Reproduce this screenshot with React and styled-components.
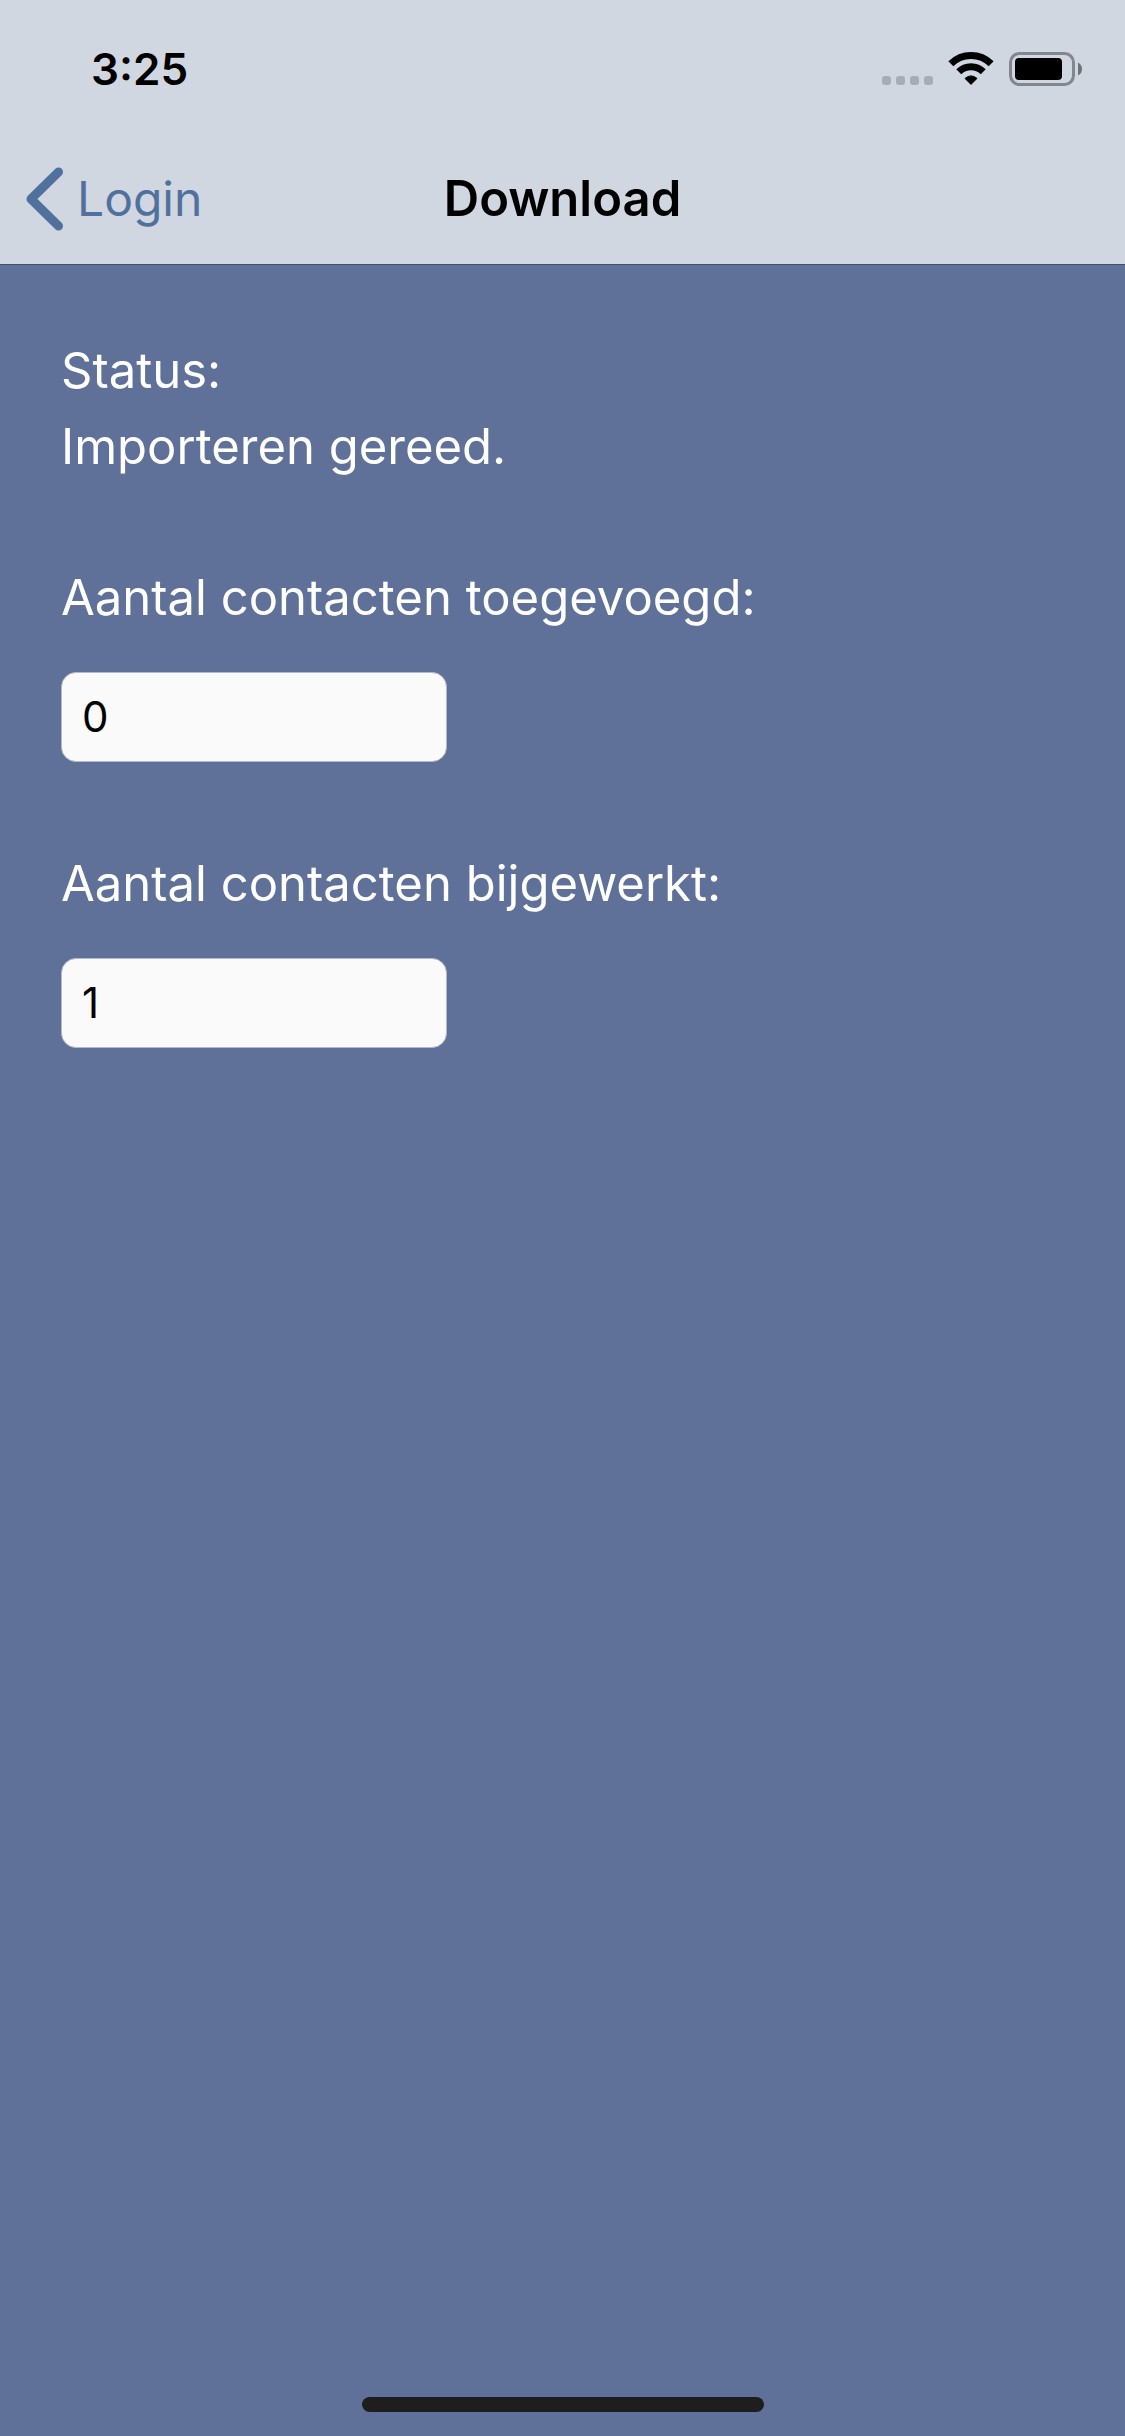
import React, { useState } from 'react';
import styled, { createGlobalStyle } from 'styled-components';

const GlobalStyle = createGlobalStyle`
  * {
    box-sizing: border-box;
  }
  body {
    margin: 0;
    background: #5f7198;
    font-family: Inter, "Liberation Sans", sans-serif;
  }
`

const Screen = styled.div`
  display: flex;
  flex-direction: column;
  min-height: 100vh;
  background: #5f7198;
`

const Header = styled.header`
  background: #d0d7e1;
  border-bottom: 1px solid #43506b;
`

const StatusBar = styled.div`
  display: flex;
  justify-content: space-between;
  align-items: center;
  height: 132px;
  padding: 6px 43px 0 91px;
`

const Time = styled.span`
  font-size: 44px;
  line-height: 54px;
  font-weight: 600;
  color: #000;
`

const Indicators = styled.div`
  display: flex;
  align-items: flex-end;
  gap: 15px;
`

const Signal = styled.div`
  display: flex;
  gap: 5px;
  padding-bottom: 1px;
`

const Dot = styled.span`
  width: 9px;
  height: 9px;
  border-radius: 3px;
  background: #a7acb5;
`

const NavBar = styled.nav`
  display: grid;
  grid-template-columns: 1fr auto 1fr;
  align-items: center;
  height: 132px;
  padding: 2px 26px 0;
`

const BackLink = styled.a`
  display: flex;
  align-items: center;
  gap: 13px;
  font-size: 48px;
  line-height: 60px;
  color: #50719d;
  text-decoration: none;
`

const Title = styled.h1`
  margin: 0;
  font-size: 49px;
  line-height: 60px;
  font-weight: 600;
  color: #000;
`

const Content = styled.main`
  flex: 1;
  padding: 68px 61px;
  color: #fff;
  font-size: 49px;
  line-height: 76px;
`

const Line = styled.p`
  margin: 0;
`

const Field = styled.div`
  display: flex;
  flex-direction: column;
  align-items: flex-start;
  gap: 36px;
  margin-top: ${props => props.$first ? 75 : 84}px;
`

const TextBox = styled.input`
  width: 386px;
  height: 90px;
  padding: 0 20px 2px;
  border: 1px solid #b3b9c6;
  border-radius: 15px;
  background: #fafafa;
  color: #000;
  font-family: inherit;
  font-size: 42px;
  outline: 0;
`

const Footer = styled.footer`
  display: flex;
  justify-content: center;
  padding-bottom: 24px;
`

const HomeIndicator = styled.div`
  width: 402px;
  height: 15px;
  border-radius: 8px;
  background: #1e1e1e;
`

function WifiIcon() {
  return (
    <svg width="46" height="34" viewBox="0 0 46 34" fill="none" stroke="#000" strokeWidth="7">
      <path d="M2.85 11.85A28.5 28.5 0 0 1 43.15 11.85" />
      <path d="M10.75 19.75A17.3 17.3 0 0 1 35.25 19.75" />
      <path d="M23 32.4L17 26.4Q23 21.4 29 26.4Z" fill="#000" strokeWidth="1" strokeLinejoin="round" />
    </svg>
  )
}

function BatteryIcon() {
  return (
    <svg width="73" height="34" viewBox="0 0 73 34">
      <rect x="1.5" y="1.5" width="63" height="31" rx="9" fill="none" stroke="#83878d" strokeWidth="3" />
      <rect x="6" y="6" width="47" height="22" rx="4" fill="#000" />
      <path d="M69 10.5Q73 12.5 73 17T69 23.5Z" fill="#6f7379" />
    </svg>
  )
}

function BackIcon() {
  return (
    <svg width="38" height="64" viewBox="0 0 38 64" fill="none" stroke="#50719d" strokeWidth="9" strokeLinecap="round" strokeLinejoin="round">
      <path d="M32.5 5L5 32L32.5 59" />
    </svg>
  )
}

function CountField({ id, label, initial, first }) {
  const [value, setValue] = useState(initial);

  return (
    <Field $first={first}>
      <label htmlFor={id}>{label}</label>
      <TextBox id={id} type="text" value={value} onChange={(event) => setValue(event.target.value)} />
    </Field>
  )
}

function App() {
  return (
    <Screen>
      <GlobalStyle />
      <Header>
        <StatusBar>
          <Time>3:25</Time>
          <Indicators>
            <Signal>
              <Dot /><Dot /><Dot /><Dot />
            </Signal>
            <WifiIcon />
            <BatteryIcon />
          </Indicators>
        </StatusBar>
        <NavBar>
          <BackLink href="#login"><BackIcon />Login</BackLink>
          <Title>Download</Title>
        </NavBar>
      </Header>
      <Content>
        <Line>Status:</Line>
        <Line>Importeren gereed.</Line>
        <CountField id="added" label="Aantal contacten toegevoegd:" initial="0" first />
        <CountField id="updated" label="Aantal contacten bijgewerkt:" initial="1" />
      </Content>
      <Footer>
        <HomeIndicator />
      </Footer>
    </Screen>
  )
}

export default App
